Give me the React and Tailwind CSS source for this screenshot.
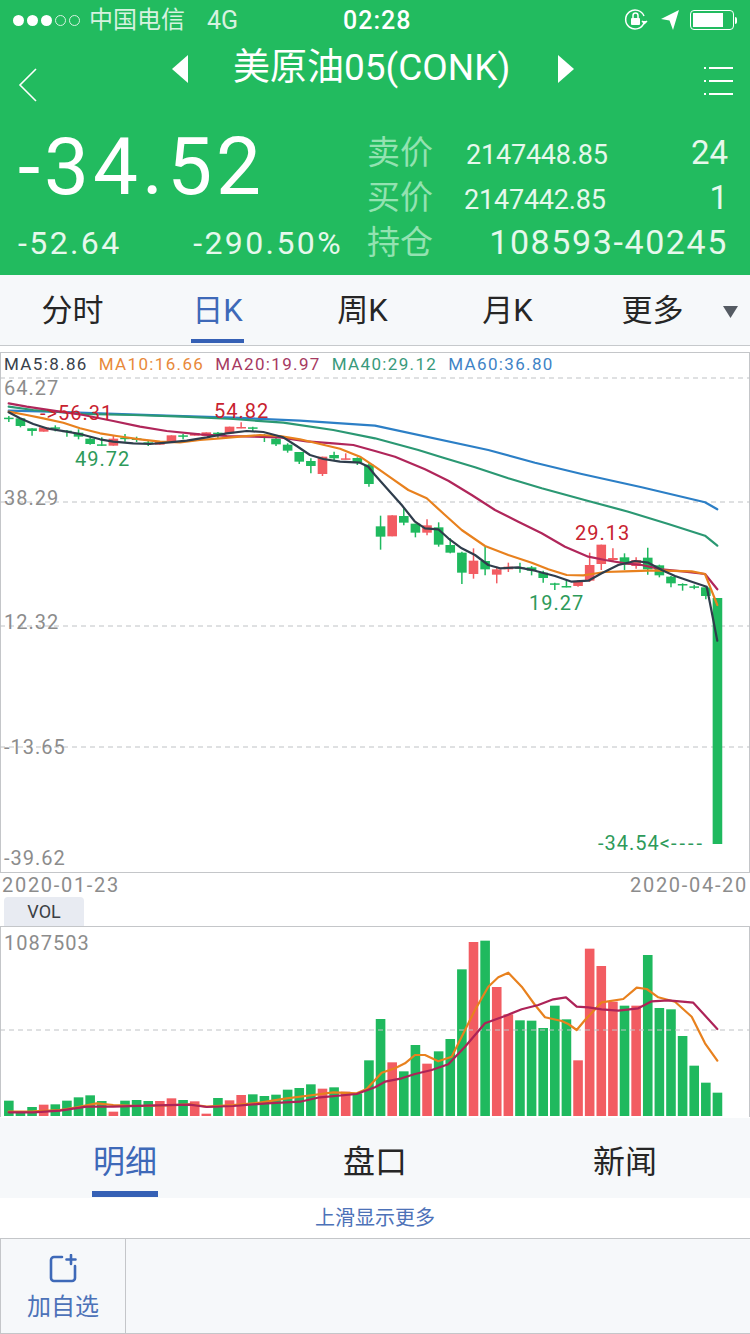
const GREEN = '#1fb95e';
const RED = '#f25c62';
const STEP = 34.85; // candle spacing in the 3x readings

// [colour, body top, body bottom, wick top, wick bottom]
const candlesA = [
  ['g',203,206,198,216],['g',205,228,205,232],['g',235,243,235,257],['r',232,245,232,245],
  ['g',232,236,226,244],['g',242,245,240,260],['g',248,260,238,268],['g',266,282,262,284],
  ['g',283,286,262,288],['r',266,287,255,287],['g',263,267,252,275],['g',265,270,260,276],
  ['g',277,280,270,288],['r',276,284,276,284],['r',256,276,256,276],['g',256,259,252,268],
  ['r',249,257,249,257],['r',247,258,247,258],['g',248,254,246,265],['r',230,250,230,250],
  ['r',231,235,217,235],['g',232,236,230,246],['g',258,262,252,276],['g',266,283,262,288],
  ['g',284,302,280,308],['g',306,335,306,342],['g',333,348,325,370],['r',320,372,320,378],
  ['g',315,325,305,332],['r',325,328,310,328],['g',324,338,322,345],['g',344,402,340,410],
];
const candlesB = [
  ['g',229,260,197,299],['r',196,259,196,259],['g',198,218,175,226],['g',221,248,221,262],
  ['r',226,248,208,256],['g',232,284,217,290],['g',285,308,265,310],['g',308,368,305,402],
  ['r',332,372,295,386],['g',333,358,290,376],['r',358,374,350,400],['r',350,358,338,366],
  ['g',352,356,338,368],['g',352,362,348,376],['g',368,384,362,398],['g',400,404,398,420],
  ['g',408,411,390,412],['r',396,408,390,410],['r',345,392,308,396],['r',284,342,284,360],
  ['r',324,330,295,336],['g',322,344,310,360],['r',330,348,322,356],['g',323,358,293,374],
  ['g',346,376,344,382],['g',380,400,378,412],['g',402,406,400,422],['g',409,412,404,418],
  ['g',412,438,408,448],['g',444,1182,444,1182],
];

const candles = [
  ...candlesA.map((c) => [c[0], 350 + c[1] / 3, 350 + c[2] / 3, 350 + c[3] / 3, 350 + c[4] / 3]),
  ...candlesB.map((c) => [c[0], 450 + c[1] / 3, 450 + c[2] / 3, 450 + c[3] / 3, 450 + c[4] / 3]),
];

// [colour, bar top read from the 3x crops]
const volA = [
  ['g',542],['g',575],['g',561],['r',554],['g',553],['g',542],['g',532],['g',526],
  ['g',543],['r',575],['g',542],['g',540],['g',543],['r',543],['r',535],['g',540],
  ['r',544],['r',581],['g',534],['r',541],['r',525],['g',523],['g',528],['g',524],
  ['g',509],['g',504],['g',493],['r',506],['g',502],['r',515],['g',520],['g',421],
];
const volB = [
  ['g',297],['r',427],['g',454],['g',375],['r',431],['g',394],['g',357],['g',148],
  ['r',66],['g',62],['r',201],['r',283],['g',301],['g',302],['g',324],['g',257],
  ['g',298],['r',421],['r',86],['r',138],['r',245],['g',257],['r',257],['g',105],
  ['g',264],['g',268],['g',348],['g',437],['g',488],['g',518],
];
const volumes = [...volA, ...volB];

const toPts = (left, right, ox, oy, leftOy, rightOy) =>
  [
    ...left.map(([x, y]) => `${(x / 3).toFixed(1)},${(leftOy + y / 3).toFixed(1)}`),
    ...right.map(([x, y]) => `${(ox + x / 3).toFixed(1)},${(rightOy + y / 3).toFixed(1)}`),
  ].join(' ');

const mainLines = [
  {
    color: '#2c7fc6',
    a: [[26,182],[150,185],[300,190],[500,197],[700,203],[900,212],[1125,227]],
    b: [[340,0],[480,38],[620,72],[800,112],[990,157],[1027,178]],
  },
  {
    color: '#2b9873',
    a: [[26,170],[100,180],[250,192],[400,195],[550,200],[700,207],[850,218],[1000,240],[1125,265]],
    b: [[130,0],[200,22],[300,52],[400,85],[500,115],[640,153],[760,185],[880,222],[990,257],[1027,287]],
  },
  {
    color: '#b0265a',
    a: [[26,160],[80,170],[160,182],[250,195],[340,213],[420,230],[500,243],[600,253],[680,258],[760,260],[840,262],[920,274],[1000,280],[1060,285],[1125,303]],
    b: [[60,20],[150,58],[220,92],[290,135],[360,180],[430,215],[500,250],[570,290],[640,320],[690,330],[750,340],[800,345],[860,358],[930,365],[990,372],[1027,418]],
  },
  {
    color: '#e8811e',
    a: [[26,185],[80,195],[130,205],[190,218],[240,235],[300,250],[350,258],[420,268],[480,275],[540,277],[600,270],[660,265],[720,260],[780,255],[840,258],[900,268],[960,282],[1020,296],[1080,320],[1125,350]],
    b: [[50,85],[100,120],[155,145],[210,195],[260,240],[330,288],[400,315],[470,338],[520,358],[575,375],[625,376],[690,366],[750,364],[820,362],[870,362],[950,364],[990,372],[1005,410],[1027,465]],
  },
  {
    color: '#2f3d4c',
    a: [[26,187],[60,205],[100,222],[140,235],[200,245],[240,252],[300,268],[340,275],[400,280],[450,282],[500,278],[560,272],[620,262],[680,250],[740,243],[790,246],[850,262],[890,288],[930,315],[970,327],[1020,335],[1080,338],[1105,350],[1125,375]],
    b: [[40,120],[80,165],[120,215],[150,235],[190,238],[220,265],[260,295],[300,315],[340,345],[375,355],[430,352],[480,362],[540,378],[590,395],[640,392],[680,370],[730,345],[780,333],[820,338],[860,360],[900,378],[950,395],[995,410],[1005,460],[1027,572]],
  },
];

const volLines = [
  {
    color: '#e8811e',
    a: [[26,575],[100,574],[180,570],[230,562],[290,550],[340,555],[420,558],[500,556],[570,553],[620,560],[700,555],[780,548],[860,535],[940,525],[1000,517],[1070,520],[1100,507]],
    b: [[0,480],[20,458],[60,445],[90,430],[120,405],[150,405],[190,424],[230,410],[260,350],[300,270],[340,200],[370,172],[400,158],[440,200],[480,255],[510,292],[560,303],[580,312],[605,330],[630,300],[680,247],[745,237],[785,203],[815,207],[850,232],[900,245],[950,290],[990,370],[1027,422]],
  },
  {
    color: '#ad2358',
    a: [[26,577],[100,577],[180,572],[260,560],[340,560],[440,557],[570,554],[620,561],[700,558],[800,550],[900,545],[960,532],[1070,522],[1125,502]],
    b: [[30,485],[80,475],[120,462],[170,450],[220,433],[270,380],[330,310],[390,288],[440,268],[490,255],[535,238],[573,232],[605,260],[640,262],[680,268],[730,272],[790,265],[830,244],[880,241],[955,248],[1027,327]],
  },
];

function StatusBar() {
  return (
    <div className="flex h-10 items-center text-[#d6f2e0]">
      <div className="ml-[13px] flex w-[70px] items-center gap-[3px]">
        {[1, 1, 1, 0, 0].map((on, i) => (
          <span
            key={i}
            className={on ? 'h-[11px] w-[11px] rounded-full bg-white' : 'h-[11px] w-[11px] rounded-full border border-[#d6f2e0]'}
          />
        ))}
      </div>
      <span className="ml-[6px] text-[24px] leading-none">中国电信</span>
      <span className="ml-[22px] text-[25px] leading-none">4G</span>
      <span className="ml-[105px] text-[25px] font-medium leading-none tracking-[1px] text-white">02:28</span>
      <div className="ml-auto mr-[13px] flex items-center gap-[10px]">
        <svg className="mr-[2px]" width="24" height="24" viewBox="0 0 24 24" fill="none" stroke="#fff" strokeWidth="1.5">
          <path d="M20 15a9.5 9.5 0 1 1 0-7" />
          <path d="M18 13l2.500 2.500 2.500-2.500" fill="#fff" />
          <rect x="7" y="10" width="9" height="7" rx="1" fill="#fff" stroke="none" />
          <path d="M9 10V7.500a2.500 2.500 0 0 1 5 0V10" />
        </svg>
        <svg width="20" height="24" viewBox="0 0 20 24" fill="#fff">
          <path d="M19 2 1 11l8.500 1.500L13 22z" />
        </svg>
        <div className="flex items-center">
          <div className="h-[20px] w-[44px] rounded-[4px] border border-white p-[2px]">
            <div className="h-full w-[30px] bg-white" />
          </div>
          <div className="ml-[1px] h-[7px] w-[2px] rounded-r bg-white" />
        </div>
      </div>
    </div>
  );
}

function TitleBar() {
  return (
    <div className="relative flex h-[62px] items-start text-white">
      <svg className="ml-[18px] mt-[28px]" width="19" height="34" viewBox="0 0 19 34" fill="none" stroke="#fff" strokeWidth="1.6">
        <path d="M18 1 2 17l16 16" />
      </svg>
      <svg className="ml-[135px] mt-[15px]" width="16" height="28" viewBox="0 0 16 28" fill="#fff">
        <path d="M16 0v28L0 14z" />
      </svg>
      <span className="ml-[45px] mt-[6px] whitespace-nowrap text-[37px] leading-[44px]">美原油05(CONK)</span>
      <svg className="absolute left-[558px] top-[15px]" width="16" height="28" viewBox="0 0 16 28" fill="#fff">
        <path d="M0 0v28l16-14z" />
      </svg>
      <svg className="absolute left-[703px] top-[26px]" width="30" height="30" viewBox="0 0 30 30" fill="none" stroke="#fff" strokeWidth="2">
        <path d="M6 2h24M6 15h24M6 28h24M1 2h2M1 15h2M1 28h2" />
      </svg>
    </div>
  );
}

function QuotePanel() {
  return (
    <div className="flex text-white">
      <div className="ml-[18px] w-[349px]">
        <div className="mt-[23px] text-[80px] font-normal leading-[84px] tracking-[4px]">-34.52</div>
        <div className="mt-[16px] flex w-[325px] justify-between text-[32px] leading-[36px] tracking-[2.4px] text-[#e6f8ec]">
          <span>-52.64</span>
          <span>-290.50%</span>
        </div>
      </div>
      <div className="w-[361px] pt-[28px]">
        <div className="flex h-[45px] items-center">
          <span className="w-[99px] text-[33px] text-[#93e2b1]">卖价</span>
          <span className="mt-[6px] text-[27px] tracking-[-0.2px] text-[#e6f8ec]">2147448.85</span>
          <span className="ml-auto text-[33px] text-[#e6f8ec]">24</span>
        </div>
        <div className="flex h-[45px] items-center">
          <span className="w-[97px] text-[33px] text-[#93e2b1]">买价</span>
          <span className="mt-[6px] text-[27px] tracking-[-0.2px] text-[#e6f8ec]">2147442.85</span>
          <span className="ml-auto text-[33px] text-[#e6f8ec]">1</span>
        </div>
        <div className="flex h-[45px] items-center">
          <span className="text-[33px] text-[#93e2b1]">持仓</span>
          <span className="ml-auto text-[34px] tracking-[1.6px] text-[#e6f8ec]">108593-40245</span>
        </div>
      </div>
    </div>
  );
}

function PeriodTabs() {
  const tabs = ['分时', '日K', '周K', '月K', '更多'];
  return (
    <div className="relative grid h-[71px] grid-cols-[145px_145px_145px_145px_145px] border-b border-[#c6c9cc] bg-[#f6f8fa]">
      {tabs.map((t) => (
        <div key={t} className="relative flex items-center justify-center text-[31px] leading-none text-[#262626]">
          <span className={t === '日K' ? 'text-[#3e69b8]' : ''}>{t}</span>
          {t === '日K' && <span className="absolute bottom-[2px] left-[46px] h-[4px] w-[53px] bg-[#3560b5]" />}
        </div>
      ))}
      <svg className="absolute left-[723px] top-[31px]" width="15" height="12" viewBox="0 0 15 12" fill="#555b63">
        <path d="M0 0h15L7.500 12z" />
      </svg>
    </div>
  );
}

function MainChart() {
  return (
    <div className="relative mt-[6px] h-[521px] border-x border-y border-[#c4c6c9] text-[20px] leading-none tracking-[1px]">
      <svg className="absolute left-[-1px] top-[-1px]" width="750" height="521" viewBox="0 352 750 521" fill="none">
        {[378, 502, 626, 747].map((y) => (
          <line key={y} x1="0" x2="750" y1={y} y2={y} stroke="#bfc2c5" strokeDasharray="5 4" />
        ))}
        {candles.map((c, i) => {
          const x = (26.5 + STEP * i) / 3;
          const color = c[0] === 'g' ? GREEN : RED;
          return (
            <g key={i}>
              <line x1={x} x2={x} y1={c[3]} y2={c[4]} stroke={color} strokeWidth="1.500" />
              <rect x={x - 4.8} y={c[1]} width="9.6" height={Math.max(c[2] - c[1], 1.5)} fill={color} />
            </g>
          );
        })}
        {mainLines.map((l) => (
          <polyline
            key={l.color}
            points={toPts(l.a, l.b, 375, 0, 350, 450)}
            stroke={l.color}
            strokeWidth="2.200"
            strokeLinejoin="round"
            strokeLinecap="round"
          />
        ))}
      </svg>

      <div className="absolute left-[3px] top-[2px] flex gap-[11px] whitespace-nowrap text-[17px] leading-[18px] tracking-[1.35px]">
        <span className="text-[#38414b]">MA5:8.86</span>
        <span className="text-[#e8893a]">MA10:16.66</span>
        <span className="text-[#a63a62]">MA20:19.97</span>
        <span className="text-[#399a7c]">MA40:29.12</span>
        <span className="text-[#3f83c6]">MA60:36.80</span>
      </div>

      <span className="absolute left-[3px] top-[25px] text-[#8c8c8c]">64.27</span>
      <span className="absolute left-[3px] top-[135px] text-[#8c8c8c]">38.29</span>
      <span className="absolute left-[3px] top-[259px] text-[#8c8c8c]">12.32</span>
      <span className="absolute left-[3px] top-[384px] text-[#8c8c8c]">-13.65</span>
      <span className="absolute left-[3px] top-[495px] text-[#8c8c8c]">-39.62</span>

      <span className="absolute left-[39px] top-[50px] text-[#c8222f]">-&gt;56.31</span>
      <span className="absolute left-[213px] top-[48px] text-[#c8222f]">54.82</span>
      <span className="absolute left-[74px] top-[96px] text-[#2e9a5a]">49.72</span>
      <span className="absolute left-[574px] top-[170px] text-[#c8222f]">29.13</span>
      <span className="absolute left-[528px] top-[240px] text-[#2e9a5a]">19.27</span>
      <span className="absolute left-[597px] top-[480px] whitespace-nowrap text-[#2e9a5a]">
        -34.54&lt;<span className="tracking-[3px]">----</span>
      </span>
    </div>
  );
}

function VolumeChart() {
  return (
    <div className="relative h-[191px] border-x border-t border-[#c4c6c9]">
      <svg className="absolute left-[-1px] top-[-1px]" width="750" height="191" viewBox="0 926 750 191" fill="none">
        {volumes.map((v, i) => {
          const x = (26.5 + STEP * i) / 3;
          const top = 920 + v[1] / 3;
          return <rect key={i} x={x - 4.8} y={top} width="9.6" height={1116 - top} fill={v[0] === 'g' ? GREEN : RED} />;
        })}
        <line x1="0" x2="750" y1="1030" y2="1030" stroke="#bfc2c5" strokeDasharray="5 4" />
        {volLines.map((l) => (
          <polyline
            key={l.color}
            points={toPts(l.a, l.b, 375, 0, 920, 920)}
            stroke={l.color}
            strokeWidth="2.200"
            strokeLinejoin="round"
            strokeLinecap="round"
          />
        ))}
      </svg>
      <span className="absolute left-[3px] top-[6px] text-[20px] leading-none tracking-[1px] text-[#8c8c8c]">1087503</span>
    </div>
  );
}

function DetailTabs() {
  const tabs = ['明细', '盘口', '新闻'];
  return (
    <div className="mt-[1px] grid h-[80px] grid-cols-3 bg-[#f6f8fa]">
      {tabs.map((t, i) => (
        <div key={t} className="relative flex items-center justify-center pt-[8px] text-[32px] leading-none text-[#262626]">
          <span className={i === 0 ? 'text-[#3e69b8]' : ''}>{t}</span>
          {i === 0 && <span className="absolute bottom-[1px] left-[92px] h-[6px] w-[66px] bg-[#3560b5]" />}
        </div>
      ))}
    </div>
  );
}

export default function App() {
  return (
    <div className="h-[1334px] w-[750px] overflow-hidden bg-white font-[Roboto,'Noto_Sans_CJK_SC',sans-serif]">
      <div className="h-[275px] bg-[#22bb5f]">
        <StatusBar />
        <TitleBar />
        <QuotePanel />
      </div>
      <PeriodTabs />
      <MainChart />
      <div className="flex h-[24px] items-center justify-between px-[2px] text-[20px] leading-none tracking-[1.7px] text-[#8c8c8c]">
        <span>2020-01-23</span>
        <span>2020-04-20</span>
      </div>
      <div className="ml-[4px] flex h-[29px] w-[80px] items-center justify-center rounded-t-[4px] bg-[#e8ebf2] text-[18px] text-[#3b3f45]">VOL</div>
      <VolumeChart />
      <DetailTabs />
      <div className="flex h-[40px] items-center justify-center text-[20px] leading-none text-[#4d72b8]">上滑显示更多</div>
      <div className="flex h-[96px] border-y border-[#c4c6c9] bg-[#f6f8fa]">
        <div className="flex w-[126px] flex-col items-center border-x border-[#c4c6c9] pt-[15px]">
          <svg width="29" height="29" viewBox="0 0 29 29" fill="none" stroke="#3e69b8" strokeWidth="2.600" strokeLinecap="round">
            <path d="M13 3H5a3 3 0 0 0-3 3v18a3 3 0 0 0 3 3h18a3 3 0 0 0 3-3V12" />
            <path d="M22 1v9M17.500 5.500h9" />
          </svg>
          <span className="mt-[12px] text-[24px] leading-none text-[#4d72b8]">加自选</span>
        </div>
      </div>
    </div>
  );
}
